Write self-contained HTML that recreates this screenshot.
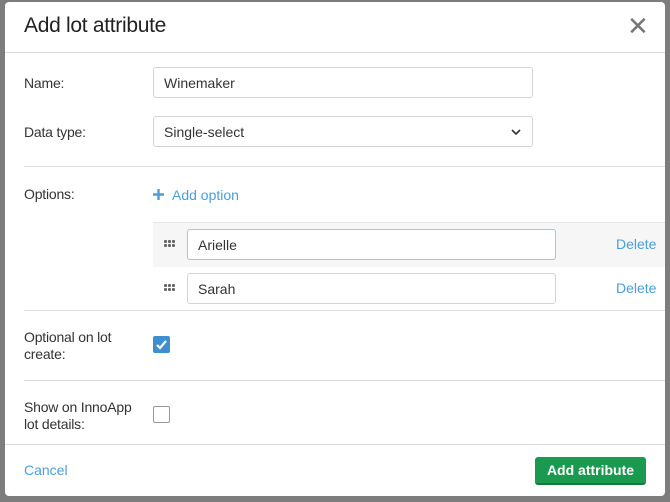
<!DOCTYPE html>
<html><head><style>
*{box-sizing:border-box;margin:0;padding:0}
body{width:670px;height:502px;background:#7d7d7d;font-family:"Liberation Sans",sans-serif;color:#333;position:relative;overflow:hidden}
.m{position:absolute;left:5px;top:2px;width:660px;height:494px;background:#fff;border-radius:4px}
.a{position:absolute}
.lbl{font-size:14px;color:#333;letter-spacing:-0.2px}
.in{position:absolute;border:1px solid #d4d4d4;border-radius:3px;background:#fff;font-size:14px;padding-left:10px;display:flex;align-items:center;color:#333}
.hr{position:absolute;height:1px;background:#dedede}
.blue{color:#4a9fd8}
.dots{position:absolute;width:12px;height:8px}
.dots i{position:absolute;width:3px;height:3px;background:#666;border-radius:1px}
</style></head><body>
<div class="m">
<div class="a" style="left:19px;top:12px;font-size:21px;color:#222;letter-spacing:-0.3px">Add lot attribute</div>
<div class="a" style="left:622px;top:13px;font-size:26px;color:#777;line-height:22px">✕</div>
<div class="hr" style="left:0;top:50px;width:660px"></div>
<div class="a lbl" style="left:19px;top:73px">Name:</div>
<div class="in" style="left:148px;top:65px;width:380px;height:31px">Winemaker</div>
<div class="a lbl" style="left:19px;top:122px">Data type:</div>
<div class="in" style="left:148px;top:114px;width:380px;height:31px">Single-select
<svg style="position:absolute;right:11px;top:11px" width="10" height="8" viewBox="0 0 10 8"><path d="M1 2l4 4 4-4" fill="none" stroke="#333" stroke-width="1.6"/></svg></div>
<div class="hr" style="left:19px;top:164px;width:641px"></div>
<div class="a lbl" style="left:19px;top:184px">Options:</div>
<svg class="a" style="left:148px;top:187px" width="11" height="11" viewBox="0 0 11 11"><path d="M5.5 0v11M0 5.5h11" stroke="#4a9fd8" stroke-width="2.4"/></svg>
<div class="a blue" style="left:167px;top:185px;font-size:14px">Add option</div>
<div class="a" style="left:148px;top:220px;width:512px;height:45px;background:#f6f6f6;border-top:1px solid #e6e6e6"></div>
<div class="dots" style="left:159px;top:238px"><i style="left:0;top:0"></i><i style="left:4px;top:0"></i><i style="left:8px;top:0"></i><i style="left:0;top:4px"></i><i style="left:4px;top:4px"></i><i style="left:8px;top:4px"></i></div>
<div class="in" style="left:182px;top:227px;width:369px;height:31px;border-color:#9ec8ea">Arielle</div>
<div class="a blue" style="left:611px;top:234px;font-size:14px">Delete</div>
<div class="dots" style="left:159px;top:282px"><i style="left:0;top:0"></i><i style="left:4px;top:0"></i><i style="left:8px;top:0"></i><i style="left:0;top:4px"></i><i style="left:4px;top:4px"></i><i style="left:8px;top:4px"></i></div>
<div class="in" style="left:182px;top:271px;width:369px;height:31px">Sarah</div>
<div class="a blue" style="left:611px;top:278px;font-size:14px">Delete</div>
<div class="hr" style="left:19px;top:308px;width:641px"></div>
<div class="a lbl" style="left:19px;top:327px;line-height:17px">Optional on lot<br>create:</div>
<div class="a" style="left:148px;top:334px;width:17px;height:17px;background:#3d8fd1;border-radius:2px"><svg width="17" height="17" viewBox="0 0 17 17"><path d="M4 9l3 3 6-7" fill="none" stroke="#fff" stroke-width="2.2"/></svg></div>
<div class="hr" style="left:19px;top:378px;width:641px"></div>
<div class="a lbl" style="left:19px;top:397px;line-height:17px">Show on InnoApp<br>lot details:</div>
<div class="a" style="left:148px;top:404px;width:17px;height:17px;border:1px solid #999;border-radius:2px;background:#fff"></div>
<div class="hr" style="left:0;top:442px;width:660px"></div>
<div class="a blue" style="left:19px;top:460px;font-size:14px">Cancel</div>
<div class="a" style="left:530px;top:455px;width:111px;height:28px;background:#1a9a50;border-radius:3px;border-bottom:2px solid #117a3d;color:#fff;font-size:14px;font-weight:bold;text-align:center;line-height:26px">Add attribute</div>
</div>
</body></html>
